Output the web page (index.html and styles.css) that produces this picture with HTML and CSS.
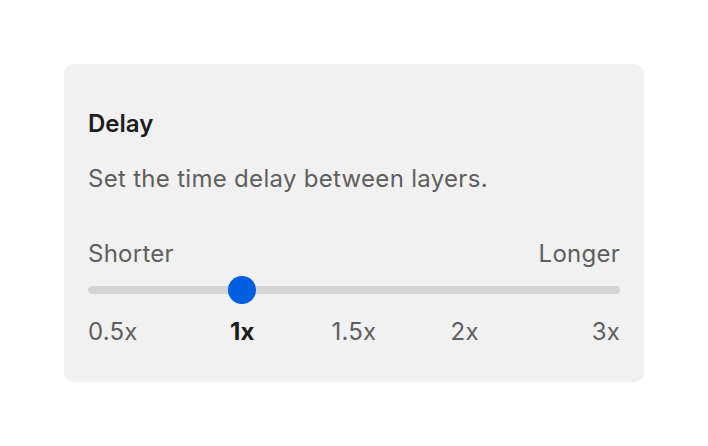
FILE: index.html
```html
<!DOCTYPE html>
<html lang="en">
<head>
    <meta charset="UTF-8">
    <meta name="viewport" content="width=device-width, initial-scale=1.0">
    <title>Delay</title>
    <link rel="stylesheet" href="styles.css">
</head>
<body>
    <div class="card">
        <div class="title">Delay</div>
        <div class="desc">Set the time delay between layers.</div>

        <div class="ends">
            <span>Shorter</span>
            <span>Longer</span>
        </div>

        <div class="slider">
            <div class="track"></div>
            <div class="thumb" style="left: 29%"></div>
        </div>

        <div class="ticks">
            <span class="tick first">0.5x</span>
            <span class="tick active" style="left: 29%">1x</span>
            <span class="tick" style="left: 50%">1.5x</span>
            <span class="tick" style="left: 70.8%">2x</span>
            <span class="tick last">3x</span>
        </div>
    </div>
</body>
</html>
```

FILE: styles.css
```css
* {
    box-sizing: border-box;
    font-family: Inter, 'Noto Sans', sans-serif;
}

body {
    margin: 0;
    background: #ffffff;
    padding: 64px 64px 0 64px;
}

.card {
    width: 580px;
    height: 318px;
    background-color: #f1f1f1;
    border-radius: 10px;
    padding: 46px 24px 0 24px;
    color: #5f5f5f;
}

.title {
    font-size: 24px;
    font-weight: 600;
    color: #1d1d1d;
    line-height: 28px;
}

.desc {
    font-size: 24px;
    line-height: 28px;
    margin-top: 27px;
    letter-spacing: 0.3px;
}

.ends {
    display: flex;
    justify-content: space-between;
    font-size: 24px;
    line-height: 28px;
    margin-top: 47px;
    letter-spacing: 0.25px;
}

.slider {
    position: relative;
    height: 28px;
    margin-top: 8px;
}

.track {
    position: absolute;
    left: 0;
    right: 0;
    top: 10px;
    height: 8px;
    border-radius: 4px;
    background-color: #d4d4d4;
}

.thumb {
    position: absolute;
    top: 0;
    width: 28px;
    height: 28px;
    margin-left: -14px;
    border-radius: 50%;
    background-color: #005fe0;
}

.ticks {
    position: relative;
    height: 28px;
    margin-top: 14px;
    font-size: 24px;
    line-height: 28px;
    letter-spacing: 0.2px;
}

.tick {
    position: absolute;
    top: 0;
    transform: translateX(-50%);
    white-space: nowrap;
}

.tick.first {
    left: 0;
    transform: none;
}

.tick.last {
    right: 0;
    transform: none;
}

.tick.active {
    font-weight: 700;
    color: #1d1d1d;
}
```
